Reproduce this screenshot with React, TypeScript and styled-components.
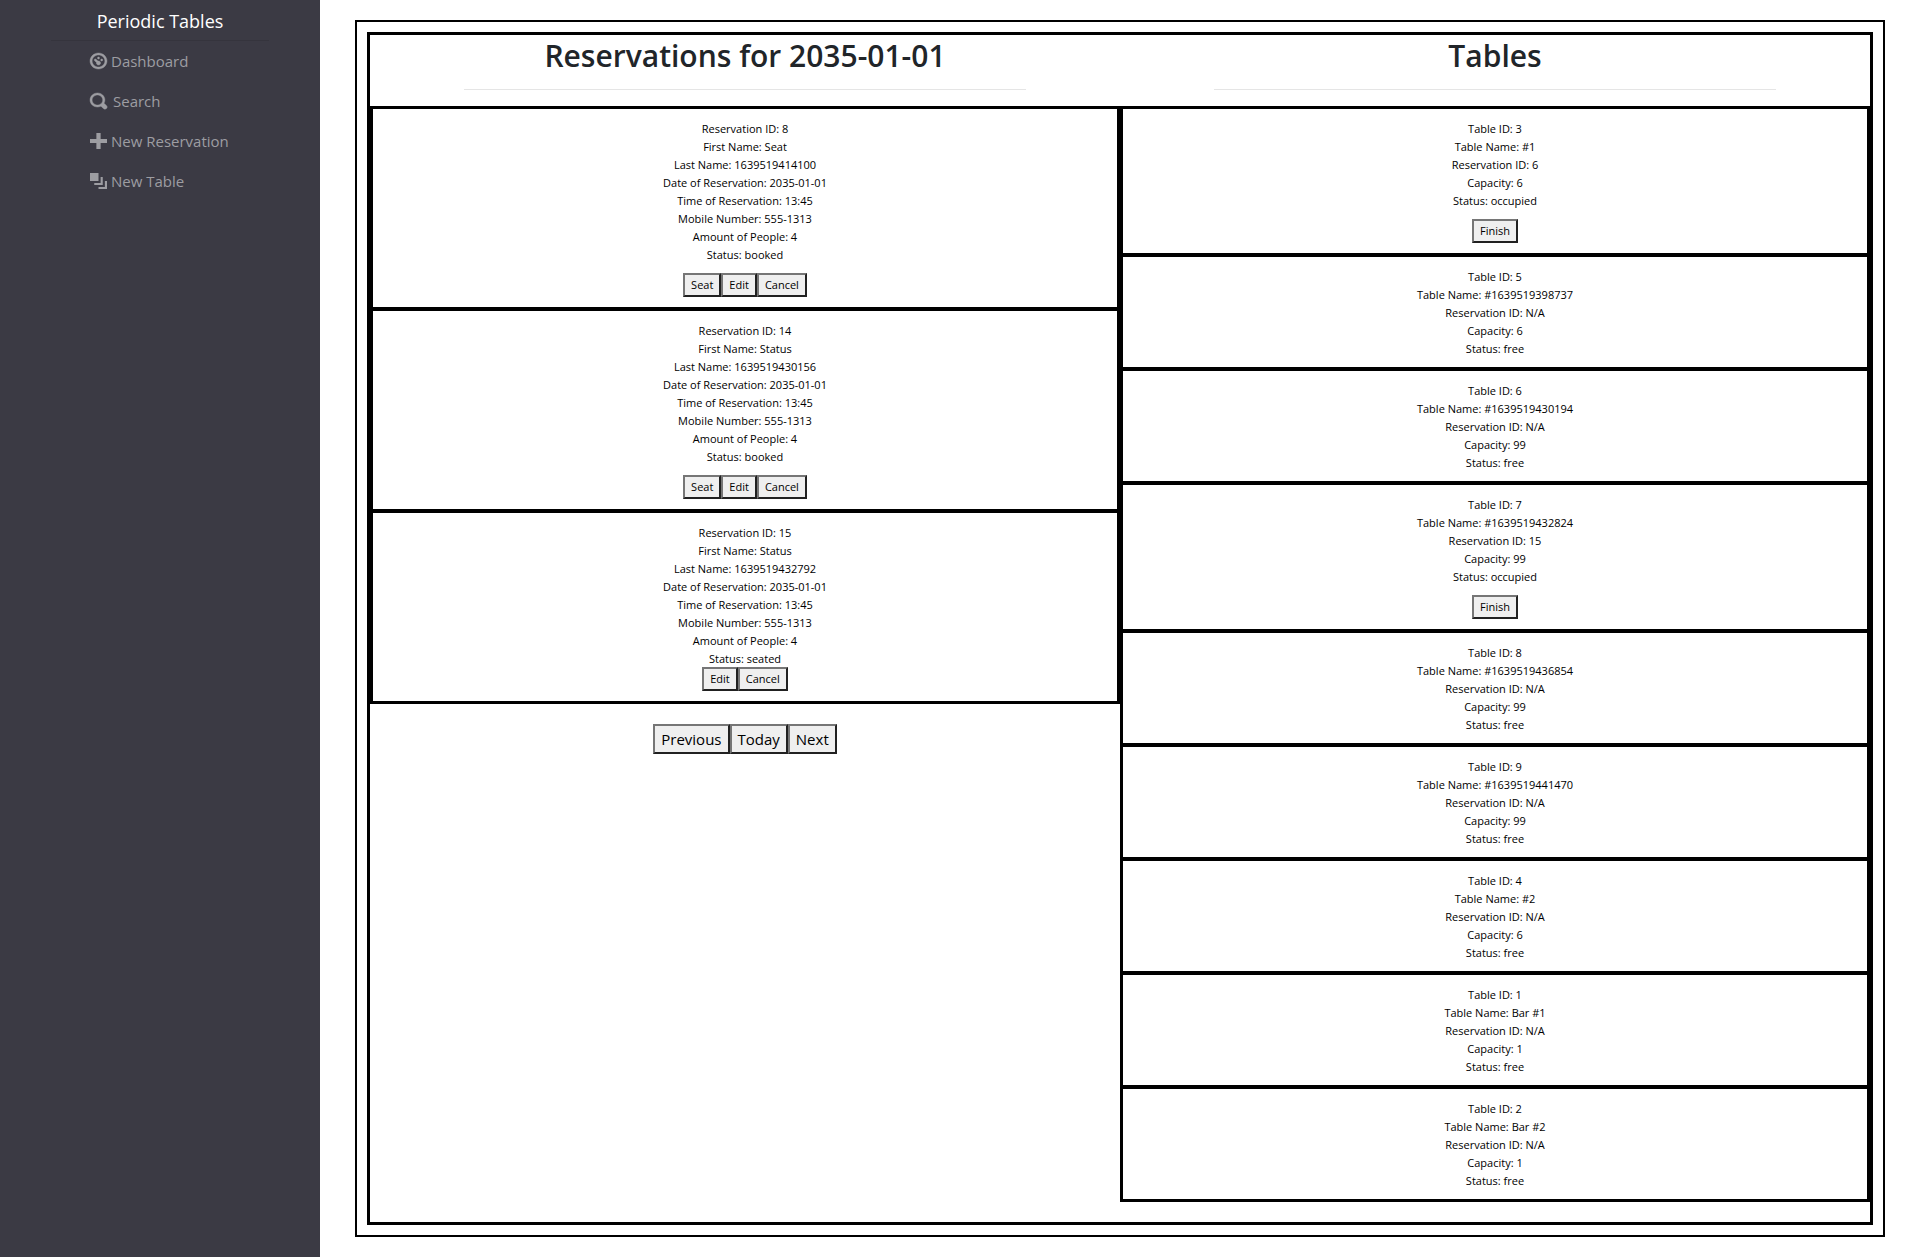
import React from "react";
import styled, { createGlobalStyle } from "styled-components";

const GlobalStyle = createGlobalStyle`
  *, *::before, *::after { box-sizing: border-box; }
  body {
    margin: 0;
    background: #fff;
    color: #212529;
    font-family: "Segoe UI", "Open Sans", "Noto Sans", sans-serif;
    font-size: 16px;
    line-height: 24px;
  }
`;

const Page = styled.div`
  display: grid;
  grid-template-columns: 1fr 5fr;
  min-height: 100vh;
`;

const Sidebar = styled.nav`
  display: flex;
  flex-direction: column;
  align-items: center;
  background: #3b3a44;
`;

const Brand = styled.a`
  color: #fff;
  font-size: 18px;
  line-height: 24px;
  padding: 9px 0 7px;
  text-decoration: none;
`;

const SidebarRule = styled.hr`
  width: 68%;
  margin: 0;
  border: 0;
  border-top: 1px solid #35343d;
`;

const Menu = styled.ul`
  align-self: stretch;
  list-style: none;
  margin: 0;
  padding: 0 0 0 90px;
`;

const MenuLink = styled.a<{ $gap: number }>`
  display: flex;
  align-items: center;
  gap: ${(p) => p.$gap}px;
  height: 40px;
  color: #9d9da2;
  font-size: 15px;
  text-decoration: none;
  white-space: nowrap;
`;

const Glyph = styled.svg<{ $stroke: number }>`
  width: 17px;
  height: 16px;
  overflow: visible;
  fill: currentColor;
  stroke: currentColor;
  stroke-width: ${(p) => p.$stroke};
`;

const Frame = styled.main`
  margin: 20px 35px;
  padding: 10px;
  border: 2px solid #000;
`;

const Board = styled.div`
  display: grid;
  grid-template-columns: 1fr 1fr;
  border: 3px solid #000;
  padding-bottom: 20px;
`;

const Column = styled.section`
  display: flex;
  flex-direction: column;
  text-align: center;
`;

const Title = styled.h2`
  margin: 0;
  padding: 1px 0 14px;
  font-size: 30px;
  font-weight: 600;
  line-height: 39px;
`;

const TitleRule = styled.hr`
  width: 75%;
  margin: 0 auto 16px;
  border: 0;
  border-top: 1px solid #e5e5e5;
`;

const Card = styled.article`
  padding: 10px;
  border: 3px solid #000;
  color: #000;
  font-size: 11px;
  line-height: 18px;

  & + & {
    margin-top: -2px;
  }
`;

const Line = styled.p`
  margin: 0;
  padding-top: 2px;
  line-height: 16px;
`;

const Actions = styled.div<{ $top: number }>`
  display: flex;
  justify-content: center;
  margin-top: ${(p) => p.$top}px;
`;

const Button = styled.button`
  padding: 1px 6px;
  border: 2px solid;
  border-color: #767676 #212121 #212121 #767676;
  border-radius: 0;
  background: #efefef;
  color: #000;
  font: inherit;
`;

const Pager = styled(Actions)`
  color: #000;
  font-size: 15px;
  line-height: 24px;
`;

const icons = {
  dashboard:
    "M4 0c-2.2 0-4 1.8-4 4s1.8 4 4 4 4-1.8 4-4-1.8-4-4-4zm0 1c1.66 0 3 1.34 3 3s-1.34 3-3 3-3-1.34-3-3 1.34-3 3-3zm0 1c-.28 0-.5.22-.5.5s.22.5.5.5.5-.22.5-.5-.22-.5-.5-.5zm-1.66 1a.5.5 0 0 0-.19.84l.91.91c-.02.08-.06.16-.06.25 0 .55.45 1 1 1s1-.45 1-1-.45-1-1-1c-.09 0-.17.04-.25.06l-.91-.91a.5.5 0 0 0-.5-.15zm3.16 0c-.28 0-.5.22-.5.5s.22.5.5.5.5-.22.5-.5-.22-.5-.5-.5z",
  search:
    "M3.5 0c-1.93 0-3.5 1.57-3.5 3.5s1.57 3.5 3.5 3.5c.59 0 1.17-.14 1.66-.41a1 1 0 0 0 .13.13l1 1a1.02 1.02 0 1 0 1.44-1.44l-1-1a1 1 0 0 0-.16-.13c.27-.49.44-1.06.44-1.66 0-1.93-1.55-3.5-3.5-3.5zm0 1c1.39 0 2.5 1.1 2.5 2.5 0 .66-.24 1.27-.66 1.72l-.03.03a1 1 0 0 0-.13.13c-.44.4-1.04.63-1.69.63-1.4 0-2.5-1.1-2.5-2.5s1.1-2.5 2.5-2.5z",
  plus: "M3 0v3h-3v2h3v3h2v-3h3v-2h-3v-3h-2z",
  layers: "M0 0v4h4v-4h-4zm5 2v3h-3v1h4v-4h-1zm2 2v3h-3v1h4v-4h-1z",
};

const menu = [
  { label: "Dashboard", icon: icons.dashboard, gap: 4, stroke: 0.2 },
  { label: "Search", icon: icons.search, gap: 6, stroke: 0.2 },
  { label: "New Reservation", icon: icons.plus, gap: 4, stroke: 0 },
  { label: "New Table", icon: icons.layers, gap: 4, stroke: 0 },
];

const reservations = [
  { id: 8, first: "Seat", last: "1639519414100", status: "booked" },
  { id: 14, first: "Status", last: "1639519430156", status: "booked" },
  { id: 15, first: "Status", last: "1639519432792", status: "seated" },
];

const tables = [
  { id: 3, name: "#1", reservation: 6, capacity: 6 },
  { id: 5, name: "#1639519398737", reservation: null, capacity: 6 },
  { id: 6, name: "#1639519430194", reservation: null, capacity: 99 },
  { id: 7, name: "#1639519432824", reservation: 15, capacity: 99 },
  { id: 8, name: "#1639519436854", reservation: null, capacity: 99 },
  { id: 9, name: "#1639519441470", reservation: null, capacity: 99 },
  { id: 4, name: "#2", reservation: null, capacity: 6 },
  { id: 1, name: "Bar #1", reservation: null, capacity: 1 },
  { id: 2, name: "Bar #2", reservation: null, capacity: 1 },
];

export default function App() {
  return (
    <>
      <GlobalStyle />
      <Page>
        <Sidebar>
          <Brand href="#">Periodic Tables</Brand>
          <SidebarRule />
          <Menu>
            {menu.map((item) => (
              <li key={item.label}>
                <MenuLink href="#" $gap={item.gap}>
                  <Glyph
                    viewBox="0 0 8 8"
                    preserveAspectRatio="none"
                    aria-hidden="true"
                    $stroke={item.stroke}
                  >
                    <path d={item.icon} />
                  </Glyph>
                  {item.label}
                </MenuLink>
              </li>
            ))}
          </Menu>
        </Sidebar>
        <Frame>
          <Board>
            <Column>
              <Title>Reservations for 2035-01-01</Title>
              <TitleRule />
              {reservations.map((r) => (
                <Card key={r.id}>
                  <Line>Reservation ID: {r.id}</Line>
                  <Line>First Name: {r.first}</Line>
                  <Line>Last Name: {r.last}</Line>
                  <Line>Date of Reservation: 2035-01-01</Line>
                  <Line>Time of Reservation: 13:45</Line>
                  <Line>Mobile Number: 555-1313</Line>
                  <Line>Amount of People: 4</Line>
                  <Line>Status: {r.status}</Line>
                  <Actions $top={r.status === "booked" ? 10 : 0}>
                    {r.status === "booked" && <Button type="button">Seat</Button>}
                    <Button type="button">Edit</Button>
                    <Button type="button">Cancel</Button>
                  </Actions>
                </Card>
              ))}
              <Pager $top={20}>
                <Button type="button">Previous</Button>
                <Button type="button">Today</Button>
                <Button type="button">Next</Button>
              </Pager>
            </Column>
            <Column>
              <Title>Tables</Title>
              <TitleRule />
              {tables.map((t) => (
                <Card key={t.id}>
                  <Line>Table ID: {t.id}</Line>
                  <Line>Table Name: {t.name}</Line>
                  <Line>Reservation ID: {t.reservation ?? "N/A"}</Line>
                  <Line>Capacity: {t.capacity}</Line>
                  <Line>Status: {t.reservation ? "occupied" : "free"}</Line>
                  {t.reservation && (
                    <Actions $top={10}>
                      <Button type="button">Finish</Button>
                    </Actions>
                  )}
                </Card>
              ))}
            </Column>
          </Board>
        </Frame>
      </Page>
    </>
  );
}
